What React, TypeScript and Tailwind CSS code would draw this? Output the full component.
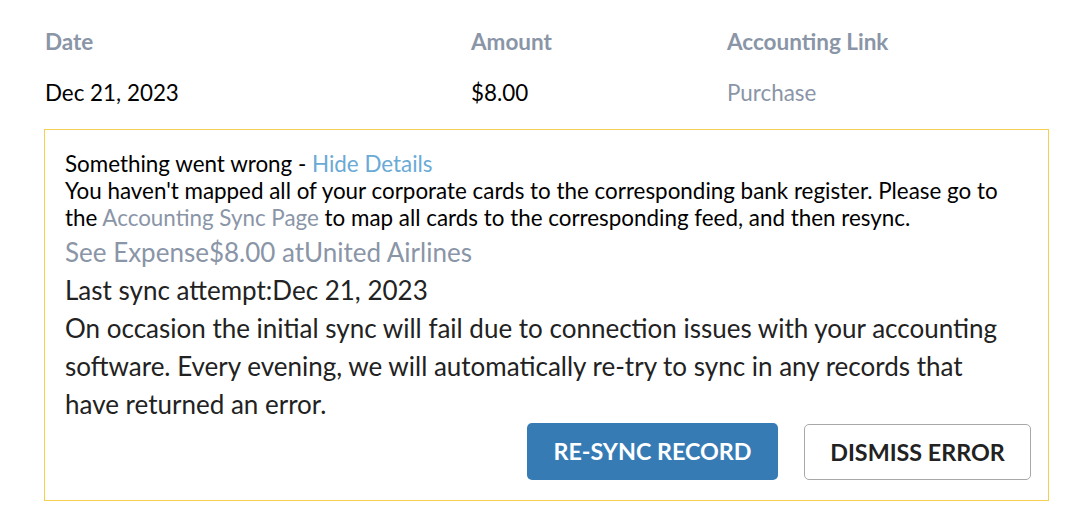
import React from "react";

const syncRecord = {
  date: "Dec 21, 2023",
  amount: "$8.00",
  link: "Purchase",
  merchant: "United Airlines",
};

export default function App() {
  return (
    <div className="w-[1086px] h-[516px] bg-white text-black" style={{ fontFamily: "Lato, 'Noto Sans', sans-serif" }}>
      <div className="pl-[45px] pt-[29px]">
        <div className="grid grid-cols-[426px_256px_1fr] text-[22.5px] leading-[26px] font-bold text-[#8a95a7]">
          <div>Date</div>
          <div>Amount</div>
          <div>Accounting Link</div>
        </div>
        <div className="grid grid-cols-[426px_256px_1fr] text-[22.4px] leading-[26px] mt-[25px]">
          <div>{syncRecord.date}</div>
          <div>{syncRecord.amount}</div>
          <div className="text-[#8a95a7]">{syncRecord.link}</div>
        </div>
      </div>

      <div className="ml-[44px] mt-[23px] w-[1005px] border border-[#f5cf52] pl-[20px] pr-[17px] pt-[20px] pb-[20px]">
        <div className="text-[22.4px] leading-[27px] pr-[20px]">
          <div>
            Something went wrong - <span className="text-[#6aaad6]">Hide Details</span>
          </div>
          <p>
            You haven't mapped all of your corporate cards to the corresponding bank register. Please go to
            the <span className="text-[#8a95a7]">Accounting Sync Page</span> to map all cards to the corresponding feed, and then resync.
          </p>
        </div>
        <div className="mt-[2px] text-[26px] leading-[38px] text-[#222] pr-[20px]">
          <div className="text-[#8a95a7]">
            See Expense{syncRecord.amount} at{syncRecord.merchant}
          </div>
          <div>Last sync attempt:{syncRecord.date}</div>
          <p>
            On occasion the initial sync will fail due to connection issues with your accounting software. Every evening, we will automatically re-try to sync in any records that have returned an error.
          </p>
        </div>
        <div className="flex justify-end gap-[26px]">
          <button className="h-[57px] w-[251px] rounded-[5px] bg-[#377bb5] text-white text-[23.3px] font-bold">
            RE-SYNC RECORD
          </button>
          <button className="h-[56px] mt-[1px] w-[227px] rounded-[5px] border border-[#a8a8a8] bg-white text-[#222] text-[23.3px] font-bold">
            DISMISS ERROR
          </button>
        </div>
      </div>
    </div>
  );
}
